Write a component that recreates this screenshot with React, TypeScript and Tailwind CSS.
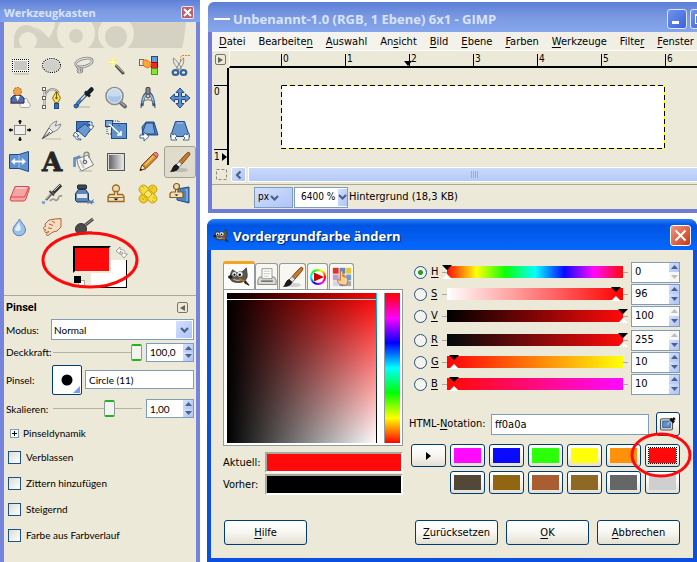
import { useId } from 'react'
import type { ReactNode } from 'react'
import clsx from 'clsx'

const TITLE = "font-['Open_Sans','Noto_Sans',sans-serif] font-bold"
const BLUE_BTN = 'bg-linear-to-br from-[#d3e0fd] to-[#aec4f6]'
const PUSH = 'rounded-[3px] border border-[#003c74] bg-linear-to-b from-white via-[#f7f6f1] to-[#e3dfd2]'

function Icon({ children, size = 24 }: { children: ReactNode; size?: number }) {
  return (
    <svg width={size} height={size} viewBox="0 0 24 24" fill="none" className="overflow-visible" aria-hidden="true">
      {children}
    </svg>
  )
}

function Chevron({ className = '' }: { className?: string }) {
  return (
    <svg width="9" height="6" viewBox="0 0 9 6" fill="none" className={className} aria-hidden="true">
      <path d="M1 1 4.500 4.500 8 1" stroke="#4d6185" strokeWidth="2.200" />
    </svg>
  )
}

function Brush() {
  return (
    <Icon>
      <ellipse cx="13" cy="20" rx="7" ry="2" fill="#000" opacity=".15" />
      <path d="M21 2.500c1.500.5 1 2-.5 4L14 14l-3-2.500 7-7.500c1.300-1.300 2-2 3-1.500Z" fill="#c87a2a" stroke="#7a4510" />
      <path d="m11 11.500 3 2.500-3 3.500-3-2.500Z" fill="#e8e8e8" stroke="#777" />
      <path d="M8 14.500 11 17c-1 3-3 4.500-8.500 4.500 2-1 2-6 5.500-7Z" fill="#1b1b1b" stroke="#000" strokeWidth=".6" />
    </Icon>
  )
}

function Wilber({ size }: { size: number }) {
  return (
    <Icon size={size}>
      <path d="M3 8 5 4l4 3c3 1 6 0 8-2l3-3 1 8c0 5-4 8-9 8-5 0-9-1-10-5Z" fill="#5c574d" stroke="#302d27" strokeWidth=".8" />
      <ellipse cx="2.500" cy="12" rx="2.500" ry="1.800" fill="#1d1b18" />
      <ellipse cx="7" cy="9" rx="2.700" ry="2.700" fill="#fff" stroke="#333" strokeWidth=".5" />
      <ellipse cx="13" cy="9" rx="3.300" ry="3" fill="#fff" stroke="#333" strokeWidth=".5" />
      <circle cx="7" cy="9.500" r="1.200" fill="#000" />
      <circle cx="12.800" cy="9.500" r="1.400" fill="#000" />
      <path d="M6 14.500c3 1.500 6 1.500 8 .5" stroke="#ddd" />
      <path d="m12 14 7 3" stroke="#c06f1d" strokeWidth="2" />
      <path d="m19 16 4 5-5-2.500Z" fill="#333" stroke="#222" />
    </Icon>
  )
}

const tools: { name: string; icon: ReactNode }[] = [
  {
    name: 'Rechteckige Auswahl',
    icon: (
      <>
        <path d="M6 20h15" stroke="#000" opacity=".12" strokeWidth="2" />
        <rect x="4.500" y="5.500" width="16" height="12" fill="#c9c9c4" stroke="#fff" />
        <rect x="5.500" y="6.500" width="14" height="10" stroke="#f4f4f0" />
        <rect x="4.500" y="5.500" width="16" height="12" stroke="#000" strokeDasharray="1 1" strokeDashoffset=".5" />
      </>
    ),
  },
  {
    name: 'Elliptische Auswahl',
    icon: (
      <>
        <ellipse cx="11.500" cy="11.500" rx="9" ry="7" fill="#d0d0cb" stroke="#fff" strokeWidth="2" />
        <ellipse cx="11.500" cy="11.500" rx="9" ry="7" stroke="#000" strokeWidth="1.200" strokeDasharray="1.200 1" />
      </>
    ),
  },
  {
    name: 'Freie Auswahl',
    icon: (
      <>
        <ellipse cx="12" cy="8.500" rx="8.500" ry="4" transform="rotate(-14 12 8.500)" stroke="#808080" strokeWidth="2.600" />
        <ellipse cx="12" cy="8.500" rx="8.500" ry="4" transform="rotate(-14 12 8.500)" stroke="#e2e2e2" strokeWidth="1.100" />
        <path d="M5 12c0 3 5 1 5 4s-5 3-4 0 1-2 2 3" stroke="#808080" strokeWidth="2.400" />
        <path d="M5 12c0 3 5 1 5 4s-5 3-4 0 1-2 2 3" stroke="#ddd" strokeWidth=".9" />
      </>
    ),
  },
  {
    name: 'Zauberstab',
    icon: (
      <>
        <circle cx="9" cy="8" r="4.500" fill="#fff36a" opacity=".35" />
        <circle cx="9" cy="8" r="2.800" fill="#fdee58" />
        <circle cx="9" cy="8" r="1.300" fill="#fff" />
        <path d="M9 4v8M5 8h8" stroke="#fffbd0" />
        <path d="m12.500 12 6.500 7" stroke="#44443c" strokeWidth="3" strokeLinecap="round" />
        <path d="m12 11 7.500 7.500" stroke="#a9aa98" strokeWidth="1.200" />
      </>
    ),
  },
  {
    name: 'Nach Farbe auswählen',
    icon: (
      <>
        <rect x="15.500" y="2.500" width="6" height="6" fill="#6d9bd0" stroke="#204a87" />
        <rect x="15.500" y="8.500" width="6" height="6" fill="#ef2929" stroke="#a40000" />
        <rect x="15.500" y="14.500" width="6" height="6" fill="#8ae234" stroke="#4e9a06" />
        <rect x="3.500" y="5.500" width="4" height="6" fill="#eee" stroke="#666" />
        <path d="M7 6.500c3-1.500 5 0 8.500 3l-1 1.500 1 1-2 1-2 1-4.500-2.500Z" fill="#ffa43c" stroke="#d9750f" />
      </>
    ),
  },
  {
    name: 'Magnetische Schere',
    icon: (
      <>
        <path d="M12.500 10V3.500l1.500-2h9" stroke="#d9861d" strokeDasharray="2 1" />
        <path d="M5.500 4c-1 5 2 8 6 12l2-2C11 10 8.500 6 5.500 4ZM15.500 4c1 5-1 8-5 12l-2-2c3-4 4-8 7-10Z" fill="#e6e6e2" stroke="#8a8a86" />
        <ellipse cx="7.500" cy="18.500" rx="2.800" ry="2.400" stroke="#35629f" strokeWidth="2.200" />
        <ellipse cx="15.500" cy="18.500" rx="2.800" ry="2.400" stroke="#35629f" strokeWidth="2.200" />
      </>
    ),
  },
  {
    name: 'Vordergrundauswahl',
    icon: (
      <>
        <path d="M12 20.500c0-5 2-8 5-8s3 2 3 4c3 0 3 5 0 5h-7Z" fill="#f6f6f4" stroke="#aaa" />
        <path d="M3 17v-5l3-2.500h7l3 2.500v5Z" fill="#4a70ac" stroke="#2a2a60" />
        <path d="m7.500 10 2.200 5 2.200-5Z" fill="#fff" />
        <path d="M2.500 17.500h14" stroke="#a22" strokeDasharray="1 1" />
        <circle cx="9.500" cy="5.500" r="4" fill="#f0a34d" stroke="#a2571a" strokeDasharray="2 1" />
      </>
    ),
  },
  {
    name: 'Pfade',
    icon: (
      <>
        <path d="M4.500 21V3M5 11c1-6 5-9 11-7l3 3" stroke="#777" strokeWidth="2" />
        <path d="M4.500 21V3M5 11c1-6 5-9 11-7l3 3" stroke="#eee" strokeWidth=".8" />
        <g fill="#fff" stroke="#666">
          <rect x="2.500" y="1.500" width="3" height="3" />
          <rect x="2.500" y="10.500" width="3" height="3" />
          <rect x="2.500" y="19.500" width="3" height="3" />
        </g>
        <path d="m16.500 5 4 7-2.500 4.500h-3L12.500 12Z" fill="#f9e15a" stroke="#8f6f00" />
        <path d="M16.500 6v6" stroke="#7a5f00" />
        <circle cx="16.500" cy="12" r="1.200" fill="#7a5f00" />
        <rect x="14.500" y="17.500" width="4" height="5" fill="#3f6fb3" stroke="#204a87" />
      </>
    ),
  },
  {
    name: 'Farbpipette',
    icon: (
      <>
        <path d="M6 21h12" stroke="#000" opacity=".12" strokeWidth="2" />
        <path d="M14.500 8 6 17l-1 3" stroke="#35506f" strokeWidth="3.400" />
        <path d="m14 8.500-6 6.300" stroke="#dfe9f3" strokeWidth="1.600" />
        <path d="m9 13.500-4 4.500" stroke="#3f7fd0" strokeWidth="2" />
        <path d="m13 5.500 5 5" stroke="#16202b" strokeWidth="2.500" />
        <path d="m15 8 4.500-4.500" stroke="#16202b" strokeWidth="4.500" strokeLinecap="round" />
        <circle cx="4" cy="20" r="2" fill="#3a77c2" stroke="#204a87" />
      </>
    ),
  },
  {
    name: 'Vergrößerung',
    icon: (
      <>
        <path d="m16.500 16.500 4.500 4" stroke="#666" strokeWidth="4" strokeLinecap="round" />
        <path d="m17 16.500 4 3.500" stroke="#aaa" strokeWidth="1.400" />
        <circle cx="10.500" cy="10" r="8.500" fill="#a9c6e6" stroke="#8a8a8a" strokeWidth="1.600" />
        <path d="M3.500 9a7 7 0 0 1 14 0c-4 2-9 2-14 0Z" fill="#c6daf0" />
        <circle cx="10.500" cy="10" r="7.200" stroke="#eee" strokeWidth=".8" />
      </>
    ),
  },
  {
    name: 'Maßband',
    icon: (
      <>
        <path d="M6 20c1-10 3-13 6-13s5 3 6 13" stroke="#37618f" strokeWidth="3" />
        <path d="M6.500 17C7.500 10 9 8 12 8s4.500 2 5.500 9" stroke="#a9c4e2" strokeWidth="1.400" />
        <path d="M6 16c4-3 8-3 12 0" stroke="#777" strokeWidth="1.200" />
        <rect x="10" y="1.500" width="4" height="7" rx="1" fill="#888" stroke="#444" />
        <circle cx="12" cy="10" r="2" fill="#ccc" stroke="#444" />
        <path d="m5.500 18-.5 4M18.500 18l.5 4" stroke="#444" />
      </>
    ),
  },
  {
    name: 'Verschieben',
    icon: (
      <path
        d="m12 2 4 4.500h-2.500v4h4V8l4.500 4-4.500 4v-2.500h-4v4H16L12 22l-4-4.500h2.500v-4h-4V16L2 12l4.500-4v2.500h4v-4H8Z"
        fill="#5d8fce"
        stroke="#204a87"
      />
    ),
  },
  {
    name: 'Ausrichten',
    icon: (
      <>
        <rect x="6.500" y="7.500" width="11" height="9" fill="#efefec" stroke="#888" />
        <path d="M12 2v4M10.500 3.500h3M12 19v4M10.500 21.500h3M1 12h4M2.500 10.500v3M19 12h4M21.500 10.500v3" stroke="#000" strokeWidth="1.500" />
      </>
    ),
  },
  {
    name: 'Zuschneiden',
    icon: (
      <>
        <path d="M5 21h16" stroke="#000" opacity=".1" strokeWidth="2" />
        <path d="M2 21 9 10l4 4Z" fill="#f4f4f2" stroke="#555" />
        <path d="M9 10c1-3 4-6 8-7l-2 5 6-2c-1 4-4 7-8 8Z" fill="#e4e4e0" stroke="#888" />
        <path d="m3 20 7-6" stroke="#555" />
      </>
    ),
  },
  {
    name: 'Drehen',
    icon: (
      <>
        <rect x="4.500" y="3.500" width="13" height="10" fill="#4377b8" stroke="#204a87" />
        <path d="m13 6 6 5-6 8-8-7Z" fill="#6b9ad2" stroke="#204a87" />
        <path d="M16 4h4v4h2l-3 4-3.500-4H18V6h-2ZM3 14l4 4H5c0 2 1 3 4 3v1c-4 0-6-1-6-4H1Z" fill="#fff" stroke="#204a87" strokeWidth=".8" />
      </>
    ),
  },
  {
    name: 'Skalieren',
    icon: (
      <>
        <rect x="7.500" y="5.500" width="15" height="15" fill="#5f91cc" stroke="#204a87" />
        <rect x="1.500" y="2.500" width="7" height="6" fill="#7ba7da" stroke="#204a87" />
        <path d="M9 3h6M15 3v5M3 9v7h5" stroke="#204a87" strokeDasharray="1 1" />
        <path d="m5 6 12 11m0-4v4h-4" stroke="#fff" strokeWidth="1.600" />
      </>
    ),
  },
  {
    name: 'Scheren',
    icon: (
      <>
        <path d="m6 9 4-5h8l4 13H7Z" fill="#4f80bd" stroke="#204a87" />
        <path d="m10 5-4 11h13L17 5Z" fill="#79a6da" stroke="#204a87" />
        <path d="M4 17h4v-3l5 4.500L8 23v-3H4Z" fill="#fff" stroke="#204a87" strokeWidth=".8" />
      </>
    ),
  },
  {
    name: 'Perspektive',
    icon: (
      <>
        <path d="M7.500 3.500h9l5 15H2.500Z" fill="#6796cf" stroke="#204a87" />
        <path d="M9 5h6" stroke="#a7c6ec" />
        <path d="M3 15v7h6l-2-2 2-2-2.500-2-1.500 1ZM21 15v7h-6l2-2-2-2 2.500-2 1.500 1Z" fill="#fff" stroke="#204a87" strokeWidth=".8" />
      </>
    ),
  },
  {
    name: 'Spiegeln',
    icon: (
      <>
        <path d="M1.500 4.500H11l9.500-3v20l-9.500-3H1.500Z" fill="#5f91cc" stroke="#204a87" />
        <path d="M11 5v13" stroke="#a7c6ec" />
        <path d="m3 11.500 4-3.500v2.500h7V8l4 3.500-4 3.500v-2.500H7V15Z" fill="#fff" stroke="#9dbde4" strokeWidth=".6" />
      </>
    ),
  },
  {
    name: 'Text',
    icon: (
      <text x="12" y="21" textAnchor="middle" fill="#252525" stroke="#252525" strokeWidth=".8" fontFamily="DejaVu Serif" fontSize="26" fontWeight="700">
        A
      </text>
    ),
  },
  {
    name: 'Füllen',
    icon: (
      <>
        <path d="M7 21h13" stroke="#000" opacity=".12" strokeWidth="2" />
        <path d="M2.500 17V8.500l6-2" stroke="#5f8fc8" strokeWidth="2.600" />
        <path d="m5 9 11-4 5.500 10-12 6C7 18 5 13 5 9Z" fill="#f4f4f2" stroke="#808080" />
        <path d="m8 10 4 8" stroke="#c4c4c0" strokeWidth="2" />
        <path d="M12 12V4.500c0-3 5-3 5 0V8" stroke="#888" strokeWidth="1.300" />
        <circle cx="13" cy="12" r="1.800" fill="#ddd" stroke="#555" />
      </>
    ),
  },
  {
    name: 'Farbverlauf',
    icon: (
      <>
        <linearGradient id="tool-gradient">
          <stop stopColor="#555" />
          <stop offset="1" stopColor="#f5f5f5" />
        </linearGradient>
        <rect x="3.500" y="3.500" width="17" height="17" fill="url(#tool-gradient)" stroke="#555" />
        <rect x="4.500" y="4.500" width="15" height="15" stroke="#ddd" />
      </>
    ),
  },
  {
    name: 'Stift',
    icon: (
      <>
        <path d="M4 20.500 6 15 17 4l4 3.500-11 11Z" fill="#d9912c" stroke="#774410" />
        <path d="m9 15 9-9" stroke="#f5c877" strokeWidth="1.500" />
        <path d="M4 20.500 6 15l4 3.500Z" fill="#f5e3bf" stroke="#774410" />
        <path d="m4 20.500.7-2 1.500 1.300Z" fill="#000" />
        <path d="m17 4 1.500-1.500c2-.5 4 1 3.500 3L21 7.500Z" fill="#e88" stroke="#a44" />
      </>
    ),
  },
  { name: 'Pinsel', icon: null },
  {
    name: 'Radierer',
    icon: (
      <>
        <path d="M7 4.500h13.500l1 2-4 11.500-1.500 1H3l-1-2Z" fill="#f6a5a5" stroke="#d8494f" />
        <path d="M2 15h14.500L21 5" stroke="#d8494f" />
        <path d="M8 6h10" stroke="#fcd6d6" strokeWidth="1.500" />
      </>
    ),
  },
  {
    name: 'Sprühpistole',
    icon: (
      <>
        <path d="M10 19c5-5 4 1 7-1s0-5 5-4" stroke="#999" strokeWidth="1.800" />
        <path d="m21 3-8 8" stroke="#333" strokeWidth="3.400" />
        <path d="m13 10-7 8" stroke="#666" strokeWidth="2.600" />
        <path d="m12 10-6 7M20 3l-6 6" stroke="#ddd" strokeWidth=".9" />
        <path d="m9.500 9 4.500 4.500" stroke="#444" strokeWidth="1.800" />
        <circle cx="3.500" cy="20.500" r="1.800" fill="#7ea8dc" />
      </>
    ),
  },
  {
    name: 'Tinte',
    icon: (
      <>
        <rect x="5.500" y="3" width="9" height="4" rx="1" fill="#3b4a5c" stroke="#222" />
        <path d="M6.500 7.500h7l3 4v7L15 20H5l-1.500-1.500v-7Z" fill="#5d86b8" stroke="#1d3555" />
        <rect x="5" y="12" width="10" height="4" fill="#dfe8f0" />
        <path d="m14 20 3-1 .5-1.500 1.500 1.500 3-2-1 2.500 2 1-3 .5.500 2-2.500-2-3 1 .5-1.500Z" fill="#5580b8" />
      </>
    ),
  },
  {
    name: 'Klonen',
    icon: (
      <>
        <circle cx="12" cy="6.500" r="3.500" fill="#ecd9b4" stroke="#9b6b23" strokeWidth="1.300" />
        <path d="M10.500 9.500h3v3h5l1.500 2v5H4v-5l1.500-2h5Z" fill="#f0dfbd" stroke="#9b6b23" strokeWidth="1.300" />
        <path d="M4 15.500h16" stroke="#9b6b23" />
        <path d="M9.500 16.500h5L12 18.500Z" fill="#000" />
      </>
    ),
  },
  {
    name: 'Heilen',
    icon: (
      <>
        <rect x="8" y="1.500" width="8" height="21" rx="3.500" transform="rotate(45 12 12)" fill="#f0cf27" stroke="#c9a61a" />
        <rect x="8" y="1.500" width="8" height="21" rx="3.500" transform="rotate(-45 12 12)" fill="#f7dd46" stroke="#c9a61a" />
        <path d="m12 8 4 4-4 4-4-4Z" fill="#fbe768" stroke="#c9a61a" />
        <path d="m6 4 2 2M4 7l2 2m10 9 2 2m-1-5 2 2M17 5l-2 2M6 16l2 2" stroke="#b99200" strokeDasharray="1 1" />
      </>
    ),
  },
  {
    name: 'Perspektivisches Klonen',
    icon: (
      <>
        <path d="m9 7 12-2v16L9 18Z" fill="#4f82c0" stroke="#204a87" />
        <path d="m17 8 2-.5V19" stroke="#a7c6ec" />
        <circle cx="8.500" cy="4.500" r="3" fill="#ecd9b4" stroke="#8b5b17" strokeWidth="1.200" />
        <path d="M7.500 7.500h2.500V10H14l1 1.500v4H2v-4L3.500 10h4Z" fill="#f0dfbd" stroke="#8b5b17" strokeWidth="1.200" />
        <path d="M6.500 12.500h4l-2 1.500Z" fill="#000" />
      </>
    ),
  },
  {
    name: 'Weichzeichnen',
    icon: (
      <>
        <path d="M11.500 5c2 4 6 7 6 11a6 5.500 0 0 1-12.500 0c0-4 4.500-7 6.500-11Z" fill="#9dc0e8" stroke="#5a7fae" />
        <path d="M11 8c-1 3-4 5-4 8 2 2 5 1 6-1" fill="#e0edfa" />
      </>
    ),
  },
  {
    name: 'Verschmieren',
    icon: (
      <>
        <path d="m5 10 4-4 6-1 6-.500V13l-4 4-4 1-5 3.500c-2 0-2-1-1-2l2-2-3 1c-2 0-2-2 0-2.500l-2-.5C3 14 4 12 5.500 12.500Z" fill="#f7dcc2" stroke="#a8683a" />
        <path d="m9 10 4 1.500M8 14l4 .5M12 7l3 2" stroke="#a8683a" />
      </>
    ),
  },
  {
    name: 'Abwedeln / Nachbelichten',
    icon: (
      <>
        <circle cx="9" cy="15" r="5.500" fill="#4a4a47" stroke="#333" />
        <path d="m12 12 9-7" stroke="#444" strokeWidth="3" />
        <path d="m13 11 8-6" stroke="#999" />
        <path d="M14 18h6" stroke="#555" />
      </>
    ),
  },
]

function Spin({ id, value, label, up = true, down = true, className }: { id: string; value: string; label: string; up?: boolean; down?: boolean; className?: string }) {
  const half = 'flex flex-1 items-center justify-center'
  return (
    <div className={clsx('flex border border-[#7f9db9] bg-white', className)}>
      <input id={id} aria-label={label} defaultValue={value} className="w-full min-w-0 flex-1 bg-transparent pl-[3px] outline-none" />
      <div className="flex w-[10px] shrink-0 flex-col">
        <button aria-label={`${label} +`} disabled={!up} className={clsx(half, up ? BLUE_BTN : 'bg-[#eeede5] opacity-40')}>
          <svg width="7" height="4" aria-hidden="true"><path d="M3.500 0 7 4H0Z" fill="#4d6185" /></svg>
        </button>
        <button aria-label={`${label} −`} disabled={!down} className={clsx(half, down ? BLUE_BTN : 'bg-[#eeede5] opacity-40')}>
          <svg width="7" height="4" aria-hidden="true"><path d="M0 0h7L3.500 4Z" fill="#4d6185" /></svg>
        </button>
      </div>
    </div>
  )
}

function Scale({ label, value }: { label: string; value: number }) {
  return (
    <input
      type="range"
      aria-label={label}
      defaultValue={value}
      className="mr-1 h-[17px] min-w-0 flex-1 appearance-none bg-[linear-gradient(#b5b2a4,#b5b2a4)] bg-[length:100%_1px] bg-center bg-no-repeat [&::-webkit-slider-thumb]:h-[17px] [&::-webkit-slider-thumb]:w-[11px] [&::-webkit-slider-thumb]:appearance-none [&::-webkit-slider-thumb]:rounded-xs [&::-webkit-slider-thumb]:border [&::-webkit-slider-thumb]:border-y-2 [&::-webkit-slider-thumb]:border-x-[#8a9a98] [&::-webkit-slider-thumb]:border-y-[#21b321] [&::-webkit-slider-thumb]:bg-[#f3f3ef]"
    />
  )
}

const channels = [
  { key: 'H', value: '0', pos: 0, up: true, down: false, ramp: 'bg-[linear-gradient(90deg,#ff0a0a,#ffff0a,#0aff0a,#0affff,#0a0aff,#ff0aff,#ff0a0a),linear-gradient(#aca899,#aca899)]' },
  { key: 'S', value: '96', pos: 96, up: true, down: true, ramp: 'bg-[linear-gradient(90deg,#fff,#f00),linear-gradient(#aca899,#aca899)]' },
  { key: 'V', value: '100', pos: 100, up: false, down: true, ramp: 'bg-[linear-gradient(90deg,#000,#ff0a0a),linear-gradient(#aca899,#aca899)]' },
  { key: 'R', value: '255', pos: 100, up: false, down: true, ramp: 'bg-[linear-gradient(90deg,#000a0a,#ff0a0a),linear-gradient(#aca899,#aca899)]' },
  { key: 'G', value: '10', pos: 4, up: true, down: true, ramp: 'bg-[linear-gradient(90deg,#ff000a,#ffff0a),linear-gradient(#aca899,#aca899)]' },
  { key: 'B', value: '10', pos: 4, up: true, down: true, ramp: 'bg-[linear-gradient(90deg,#ff0a00,#ff0aff),linear-gradient(#aca899,#aca899)]' },
]

function ChannelRow({ channel }: { channel: (typeof channels)[number] }) {
  const id = useId()
  return (
    <div className="flex h-[22px] items-center">
      <input
        id={id}
        type="radio"
        name="channel"
        defaultChecked={channel.key === 'H'}
        className="size-[13px] appearance-none rounded-full border border-[#1d5281] bg-[#f4f3ee] checked:bg-[radial-gradient(circle,#21a121_0_2px,#f4f3ee_3px)]"
      />
      <label htmlFor={id} className="ml-1 w-[11px] underline underline-offset-2">{channel.key}</label>
      <input
        type="range"
        aria-label={channel.key}
        defaultValue={channel.pos}
        className={clsx(
          'h-[14px] min-w-0 flex-1 appearance-none [background-position:center] [background-repeat:no-repeat] [background-size:calc(100%-10px)_12px,100%_1px]',
          '[&::-webkit-slider-thumb]:h-[14px] [&::-webkit-slider-thumb]:w-[10px] [&::-webkit-slider-thumb]:appearance-none [&::-webkit-slider-thumb]:bg-[linear-gradient(#000_50%,#fff_50%)] [&::-webkit-slider-thumb]:[clip-path:polygon(0_0,100%_0,50%_36%,50%_64%,100%_100%,0_100%,50%_64%,50%_36%)]',
          channel.ramp,
        )}
      />
      <Spin id={`${id}-value`} label={channel.key} value={channel.value} up={channel.up} down={channel.down} className="ml-[3px] h-[21px] w-[49px]" />
    </div>
  )
}

function Check({ label }: { label: string }) {
  return (
    <label className="flex h-[26px] items-center gap-[5px] pl-0.5">
      <input type="checkbox" className="size-[13px] appearance-none border border-[#1d5281] bg-linear-to-br from-[#dcdcd7] to-white" />
      {label}
    </label>
  )
}

function Toolbox() {
  return (
    <aside className="flex min-h-screen w-[200px] shrink-0 flex-col border-x-4 border-[#7684dc] bg-[#ece9d8] font-[Lato,Roboto,sans-serif] text-[10px] leading-3">
      <header className="-mx-1 flex h-[22px] items-center justify-between bg-linear-to-b from-[#5f7fd8] via-[#7b9ae2] to-[#83a5ee] px-1 pt-[3px]">
        <h1 className={clsx(TITLE, 'text-[11px] text-[#d8e4f8]')}>Werkzeugkasten</h1>
        <button aria-label="Schließen" className="mr-0.5 flex size-[13px] items-center justify-center rounded-xs border border-white/80 bg-[#b8606c]">
          <svg width="9" height="9" aria-hidden="true"><path d="m1 1 7 7m0-7L1 8" stroke="#fff" strokeWidth="2" /></svg>
        </button>
      </header>
      <svg viewBox="0 0 192 28" className="h-7 w-full" aria-hidden="true">
        <path d="M10 26V16C11 8 16 3 22 3c10 0 15 13 32 13V0h128c-1 10-2 18-4 26Z" fill="#d5d2c3" />
        <path d="M30 4c8 8 14 14 24 14V0H30Z" fill="#d5d2c3" />
        <circle cx="24" cy="19" r="9" fill="#ece9d8" />
        <path d="M24 3c8 0 14 6 21 13 3-5 6-10 6-16H24Z" fill="#ece9d8" />
        <circle cx="72" cy="11" r="19" fill="#ece9d8" />
        <circle cx="112" cy="12" r="18" fill="#ece9d8" />
        <circle cx="72" cy="14" r="7" fill="#d5d2c3" />
        <circle cx="112" cy="15" r="11" fill="#d5d2c3" />
        <path d="M0 26h192v2H0Z" fill="#ece9d8" />
      </svg>

      <div className="grid auto-rows-[32px] grid-cols-6">
        {tools.map((tool) => (
          <button
            key={tool.name}
            aria-label={tool.name}
            className={clsx('flex items-center justify-center', tool.name === 'Pinsel' && 'rounded-[3px] border border-[#a5a294] bg-[#dfdccd]')}
          >
            {tool.name === 'Pinsel' ? <Brush /> : <Icon>{tool.icon}</Icon>}
          </button>
        ))}
      </div>

      <div className="relative h-[53px]">
        <button aria-label="Hintergrundfarbe" className="absolute left-[87px] top-[18px] h-7 w-9 border-r border-b border-black bg-white" />
        <div className="absolute left-[69px] top-[32px] h-[13px] w-[18px] bg-[#ece9d8]" />
        <button aria-label="Vordergrundfarbe" className="absolute left-[69px] top-1 h-[27px] w-[38px] border-2 border-t-black border-r-[#ece9d8] border-b-[#ece9d8] border-l-black bg-[#ff0a0a]" />
        <svg className="absolute left-[111px] top-1" width="13" height="13" viewBox="0 0 13 13" aria-hidden="true">
          <path d="m1 5 4-4v2.500c4 0 5 1 5 4.500h2.500L9 12 5.500 8H8C8 6 7 5.500 5 5.500V8Z" fill="#fff" stroke="#888" strokeWidth=".8" />
        </svg>
        <svg className="absolute left-[69px] top-[34px]" width="13" height="11" aria-hidden="true">
          <rect x="5.500" y="4.500" width="6" height="6" fill="#fff" stroke="#aaa" />
          <rect x="1" width="7" height="7" fill="#000" />
        </svg>
        <svg className="pointer-events-none absolute -top-3 left-9" width="100" height="62" aria-hidden="true">
          <ellipse cx="50" cy="30" rx="47" ry="27" fill="none" stroke="#ff0a0a" strokeWidth="3" />
        </svg>
      </div>

      <section className="border-t border-[#aca899] px-0.5">
        <div className="flex h-[23px] items-center justify-between pr-1.5">
          <h2 className="font-[Roboto,sans-serif] text-[11px] font-bold">Pinsel</h2>
          <button aria-label="Menü" className="flex size-[11px] items-center justify-center rounded-xs border border-[#77756a]">
            <svg width="5" height="6" aria-hidden="true"><path d="M5 0v6L0 3Z" fill="#66645a" /></svg>
          </button>
        </div>
        <div className="flex h-[21px] items-center">
          <label htmlFor="mode" className="w-[45px]">Modus:</label>
          <div className="relative flex-1">
            <select id="mode" className="h-[21px] w-full appearance-none border border-[#7f9db9] bg-white pl-0.5">
              <option>Normal</option>
            </select>
            <span className={clsx('pointer-events-none absolute top-0.5 right-0.5 flex h-[17px] w-4 items-center justify-center', BLUE_BTN)}>
              <Chevron />
            </span>
          </div>
        </div>
        <div className="flex h-6 items-center">
          <label htmlFor="opacity" className="w-[47px]">Deckkraft:</label>
          <Scale label="Deckkraft" value={100} />
          <Spin id="opacity" label="Deckkraft" value="100,0" className="h-[19px] w-12" />
        </div>
        <div className="flex h-[31px] items-center">
          <label htmlFor="brush" className="w-[46px]">Pinsel:</label>
          <button aria-label="Pinselauswahl" className="relative flex h-[30px] w-[30px] items-center justify-center rounded-xs border border-[#003c74] bg-white">
            <svg width="28" height="28" aria-hidden="true">
              <circle cx="14" cy="14" r="5.500" />
              <path d="M27 20v7h-7Z" fill="#7a9aff" />
            </svg>
          </button>
          <input id="brush" defaultValue="Circle (11)" className="ml-[3px] h-[19px] min-w-0 flex-1 border border-[#7f9db9] bg-white pl-[3px]" />
        </div>
        <div className="flex h-[27px] items-center">
          <label htmlFor="scale" className="w-[47px]">Skalieren:</label>
          <Scale label="Skalieren" value={65} />
          <Spin id="scale" label="Skalieren" value="1,00" className="h-[19px] w-12" />
        </div>
        <button className="flex h-[22px] items-center gap-1 pl-1">
          <svg width="9" height="9" aria-hidden="true">
            <rect x=".5" y=".5" width="8" height="8" fill="#fff" stroke="#7f9db9" />
            <path d="M2 4.500h5M4.500 2v5" stroke="#000" />
          </svg>
          Pinseldynamik
        </button>
        <Check label="Verblassen" />
        <Check label="Zittern hinzufügen" />
        <Check label="Steigernd" />
        <Check label="Farbe aus Farbverlauf" />
      </section>
    </aside>
  )
}

const menus: [string, string, string][] = [
  ['', 'D', 'atei'],
  ['Bearbeite', 'n', ''],
  ['', 'A', 'uswahl'],
  ['An', 's', 'icht'],
  ['', 'B', 'ild'],
  ['', 'E', 'bene'],
  ['', 'F', 'arben'],
  ['', 'W', 'erkzeuge'],
  ['Filte', 'r', ''],
  ['', 'F', 'enster'],
]

function ImageWindow() {
  const caption = 'size-5 shrink-0 rounded-[3px] border border-[#dce6fb] bg-linear-to-br from-[#7094ee] to-[#3b62d8]'
  return (
    <section className="mt-0.5 -mr-[42px] ml-px h-[211px] rounded-t-lg border-x-4 border-b-4 border-[#6f7cd6] bg-[#ece9d8]">
      <header className="-mx-1 flex h-[30px] items-center gap-[3px] rounded-t-md bg-linear-to-b from-[#5b7fd8] via-[#7b99e1] to-[#85a6ec] px-1.5 pt-1">
        <span className="h-0.5 w-4 bg-white" />
        <h1 className={clsx(TITLE, 'flex-1 text-[13px] whitespace-nowrap text-[#d8e4f8]')}>Unbenannt-1.0 (RGB, 1 Ebene) 6x1 - GIMP</h1>
        <button aria-label="Minimieren" className={clsx(caption, 'flex items-end p-1')}>
          <span className="h-[3px] w-[7px] bg-white" />
        </button>
        <button aria-label="Maximieren" className={clsx(caption, 'p-1')}>
          <span className="block size-full border border-t-2 border-white" />
        </button>
        <button aria-label="Schließen" className={caption} />
      </header>
      <nav className="flex h-[19px] items-center gap-[13px] border-b border-white bg-linear-to-r from-[#f6f5f0] to-[#efede2] pt-0.5 pl-[7px]">
        {menus.map(([before, key, after]) => (
          <button key={before + key + after}>
            {before}<u className="underline-offset-2">{key}</u>{after}
          </button>
        ))}
      </nav>
      <div className="flex h-[17px]">
        <button aria-label="Bildmenü" className="m-[3px] flex size-[11px] items-center justify-center rounded-xs border border-[#77756a]">
          <svg width="5" height="6" aria-hidden="true"><path d="M0 0v6l5-3Z" fill="#66645a" /></svg>
        </button>
        <div className="relative flex flex-1 items-end border-b-2 border-l border-b-black border-l-white pl-[51px] text-[10px] leading-[10px]">
          {[0, 1, 2, 3, 4, 5, 6].map((n) => (
            <span key={n} className="h-3 w-16 shrink-0 border-l border-black pl-px">{n}</span>
          ))}
          <svg className="absolute bottom-0 left-[174px]" width="8" height="5" aria-hidden="true"><path d="M0 0h8L4 5Z" /></svg>
        </div>
      </div>
      <div className="flex h-[97px]">
        <div className="flex w-[17px] flex-col border-r-2 border-black pt-[17px] pl-0.5 text-[10px] leading-3">
          <span className="h-16 border-t border-black">0</span>
          <span className="flex h-3.5 items-center justify-between border-t border-black">
            1
            <svg width="5" height="8" aria-hidden="true"><path d="M0 0v8l5-4Z" /></svg>
          </span>
        </div>
        <svg className="mt-[17px] ml-[52px]" width="385" height="65" aria-hidden="true">
          <rect x=".5" y=".5" width="383" height="63" fill="#fff" stroke="#ff0" />
          <rect x=".5" y=".5" width="383" height="63" fill="none" stroke="#000" strokeDasharray="5 3" strokeDashoffset="-.5" />
        </svg>
      </div>
      <div className="flex h-5 items-center border-b border-[#aca899]">
        <svg className="ml-1" width="11" height="11" aria-hidden="true">
          <rect x=".5" y=".5" width="10" height="10" fill="none" stroke="#888" strokeDasharray="3 2" />
        </svg>
        <button aria-label="Nach links" className={clsx('ml-1 flex h-[15px] w-[15px] items-center justify-center rounded-xs border border-white', BLUE_BTN)}>
          <Chevron className="rotate-90" />
        </button>
        <div className="ml-0.5 flex h-[15px] flex-1 items-center justify-center border border-white bg-linear-to-b from-[#cbdafb] to-[#b4c9f8] pr-[34px]">
          <svg width="8" height="7" aria-hidden="true"><path d="M.5 0v7M2.500 0v7M4.500 0v7M6.500 0v7" stroke="#8cadee" /></svg>
        </div>
      </div>
      <footer className="flex h-6 items-center pl-[42px]">
        <div className="relative">
          <select aria-label="Einheit" className={clsx('h-[21px] w-[39px] appearance-none border border-[#7f9db9] pl-[3px] text-[10px]', BLUE_BTN)}>
            <option>px</option>
          </select>
          <Chevron className="pointer-events-none absolute top-2 right-3.5" />
        </div>
        <div className="relative ml-px">
          <select aria-label="Zoom" className="h-[21px] w-[54px] appearance-none border border-[#7f9db9] bg-white pl-1.5 text-[10px]">
            <option>6400 %</option>
          </select>
          <span className={clsx('pointer-events-none absolute top-0.5 right-px flex h-[17px] w-[9px] items-center justify-center', BLUE_BTN)}>
            <Chevron />
          </span>
        </div>
        <p className="ml-px">Hintergrund (18,3 KB)</p>
      </footer>
    </section>
  )
}

const swatches = [
  ['#ff0aff', 'bg-[#ff0aff]'],
  ['#0a0aff', 'bg-[#0a0aff]'],
  ['#2bff0a', 'bg-[#2bff0a]'],
  ['#ffff0a', 'bg-[#ffff0a]'],
  ['#ff900a', 'bg-[#ff900a]'],
  ['#ff0a0a', 'bg-[#ff0a0a]'],
  ['#534737', 'bg-[#534737]'],
  ['#906613', 'bg-[#906613]'],
  ['#a85e30', 'bg-[#a85e30]'],
  ['#8d6925', 'bg-[#8d6925]'],
  ['#666666', 'bg-[#666666]'],
  ['#cfcfcf', 'bg-[#cfcfcf]'],
]

const tabs: { name: string; width: string; icon: ReactNode }[] = [
  {
    name: 'Drucker',
    width: 'w-[23px]',
    icon: (
      <Icon size={20}>
        <path d="M3 12h18l2 4v5H1v-5Z" fill="#d8d8d4" stroke="#777" />
        <path d="M6 2h12v12H6Z" fill="#fff" stroke="#888" />
        <path d="M8 5h8M8 8h8M8 11h6" stroke="#bbb" />
        <path d="M5 17h14" stroke="#777" strokeWidth="2" />
      </Icon>
    ),
  },
  { name: 'Wasserfarbe', width: 'w-[27px]', icon: <Brush /> },
  {
    name: 'Rad',
    width: 'w-[21px]',
    icon: (
      <div className="flex size-4 shrink-0 items-center justify-center rounded-full bg-[conic-gradient(from_90deg,red,magenta,blue,cyan,lime,yellow,red)]">
        <svg width="12" height="12" className="rounded-full bg-white" aria-hidden="true"><path d="M2 1.500 12 6 2 10.500Z" fill="#c00" /></svg>
      </div>
    ),
  },
  {
    name: 'Palette',
    width: 'w-[25px]',
    icon: (
      <Icon size={20}>
        <path d="M1 1h7v7H1Z" fill="#d93434" /><path d="M9 1h7v7H9Z" fill="#5f88c9" /><path d="M17 1h6v7h-6Z" fill="#e8c634" />
        <path d="M1 9h7v7H1Z" fill="#c49bc9" /><path d="M9 9h7v7H9Z" fill="#e28f38" /><path d="M17 9h6v7h-6Z" fill="#6da0d8" />
        <path d="M1 17h7v6H1Z" fill="#cfd8ea" /><path d="M9 17h7v6H9Z" fill="#7293c8" /><path d="M17 17h6v6h-6Z" fill="#aaa" />
        <path d="M9 21c-2-3-3-5-2-6l3 1V6c0-2 3-2 3 0v5l6 2v5l-2 4Z" fill="#f6cf9c" stroke="#ad6c2a" />
      </Icon>
    ),
  },
]

function DialogButton({ first, rest }: { first: string; rest: string }) {
  return (
    <button className={clsx('h-[25px] w-[83px]', PUSH)}>
      <u className="underline-offset-2">{first}</u>{rest}
    </button>
  )
}

function ColorDialog() {
  return (
    <section className="mt-1.5 flex flex-1 flex-col rounded-t-lg border-4 border-t-0 border-[#0a4fe0] bg-[#ece9d8]">
      <header className="-mx-1 flex h-[31px] items-center gap-1 rounded-t-lg bg-linear-to-b from-[#2a80f8] via-[#0054e3] via-20% to-[#0668fc] px-1.5 pt-0.5">
        <Wilber size={16} />
        <h1 className={clsx(TITLE, 'flex-1 text-[13px] text-white [text-shadow:1px_1px_1px_#0a246a]')}>Vordergrundfarbe ändern</h1>
        <button aria-label="Schließen" className="flex size-[21px] items-center justify-center rounded-[3px] border border-white bg-linear-to-br from-[#f0937a] to-[#c8340c]">
          <svg width="13" height="13" aria-hidden="true"><path d="m1.500 1.500 10 10m0-10-10 10" stroke="#fff" strokeWidth="2" /></svg>
        </button>
      </header>
      <div className="flex flex-1 gap-1.5 pt-[11px] pr-[13px] pl-3">
        <div className="w-[180px] shrink-0">
          <div role="tablist" className="flex h-[28px] items-end">
            <button role="tab" aria-label="GIMP" aria-selected="true" className="flex h-7 w-8 items-center justify-center rounded-t-[3px] border border-b-0 border-t-[3px] border-[#919b9c] border-t-[#f5a51d] bg-[#fcfcfa]">
              <Wilber size={22} />
            </button>
            {tabs.map((tab) => (
              <button key={tab.name} role="tab" aria-label={tab.name} aria-selected="false" className={clsx('mr-px flex h-[26px] items-center justify-center rounded-t-[3px] border border-b-0 border-[#919b9c] bg-[#f8f7f2]', tab.width)}>
                {tab.icon}
              </button>
            ))}
          </div>
          <div className="flex h-[157px] border border-[#919b9c] bg-white p-[3px] pr-0.5">
            <div className="relative h-[150px] w-[150px] bg-[linear-gradient(to_right,#000,transparent),linear-gradient(#f00,#fff)]">
              <div className="absolute inset-x-0 top-1.5 h-px bg-linear-to-r from-white to-[#3cf5f5]" />
              <div className="absolute inset-y-0 right-0 w-px bg-linear-to-b from-cyan-400 to-black" />
            </div>
            <div className="ml-auto h-[150px] w-4 border-l border-[#919b9c] bg-[linear-gradient(#f00,#f0f,#00f,#0ff,#0f0,#ff0,#f00)]" />
          </div>
          <dl className="mt-1.5 grid grid-cols-[42px_1fr] items-center gap-y-px">
            <dt>Aktuell:</dt>
            <dd className="h-[21px] border-2 border-t-[#aca899] border-r-white border-b-white border-l-[#aca899] bg-[#ff0a0a]" />
            <dt>Vorher:</dt>
            <dd className="h-[21px] border-2 border-t-[#aca899] border-r-white border-b-white border-l-[#aca899] bg-black" />
          </dl>
        </div>
        <div className="min-w-0 flex-1">
          <div className="pl-[5px]">
            {channels.slice(0, 3).map((c) => <ChannelRow key={c.key} channel={c} />)}
          </div>
          <div className="mt-0.5 pl-[5px]">
            {channels.slice(3).map((c) => <ChannelRow key={c.key} channel={c} />)}
          </div>
          <div className="mt-[17px] flex h-6 items-center">
            <label htmlFor="html" className="w-[82px]">HTML-<u className="underline-offset-2">N</u>otation:</label>
            <input id="html" defaultValue="ff0a0a" className="h-[21px] min-w-0 flex-1 border border-[#7f9db9] bg-white pl-[3px]" />
            <button aria-label="Farbe aufnehmen" className={clsx('ml-[7px] flex size-6 items-center justify-center', PUSH)}>
              <Icon size={18}>
                <rect x="2" y="5" width="16" height="15" rx="2" fill="#ddd" stroke="#555" strokeWidth="1.500" />
                <rect x="5" y="8" width="10" height="9" fill="#5f91cc" stroke="#204a87" />
                <path d="m11 13 7-7" stroke="#9bc" strokeWidth="2" />
                <path d="m15 5 5 5M18 7l3-3" stroke="#111" strokeWidth="3.500" />
              </Icon>
            </button>
          </div>
          <div className="mt-2 ml-0.5 grid grid-cols-7 gap-1">
            <button aria-label="Zum Farbverlauf hinzufügen" className={clsx('row-span-2 flex h-[23px] items-center justify-center', PUSH)}>
              <svg width="5" height="8" aria-hidden="true"><path d="M0 0v8l5-4Z" /></svg>
            </button>
            {swatches.map(([name, fill], i) => (
              <button key={name} aria-label={name} className={clsx('relative h-[23px] p-[3px]', PUSH)}>
                <span className={clsx('block size-full', fill, i === 5 && 'outline outline-dotted outline-black')} />
                {i === 5 && (
                  <svg className="pointer-events-none absolute -top-3.5 -left-4 z-10" width="64" height="48" aria-hidden="true">
                    <ellipse cx="31" cy="24" rx="29" ry="21" fill="none" stroke="#ff0a0a" strokeWidth="3" />
                  </svg>
                )}
              </button>
            ))}
          </div>
        </div>
      </div>
      <footer className="flex gap-2 pr-[13px] pb-[13px] pl-[13px]">
        <DialogButton first="H" rest="ilfe" />
        <span className="flex-1" />
        <DialogButton first="Z" rest="urücksetzen" />
        <DialogButton first="O" rest="K" />
        <DialogButton first="A" rest="bbrechen" />
      </footer>
    </section>
  )
}

export default function App() {
  return (
    <div className="flex min-h-screen gap-[7px] bg-white text-black">
      <Toolbox />
      <main className="flex min-w-0 flex-1 flex-col overflow-hidden font-['DejaVu_Sans_Condensed','DejaVu_Sans',sans-serif] text-[11px] leading-4">
        <ImageWindow />
        <ColorDialog />
      </main>
    </div>
  )
}
